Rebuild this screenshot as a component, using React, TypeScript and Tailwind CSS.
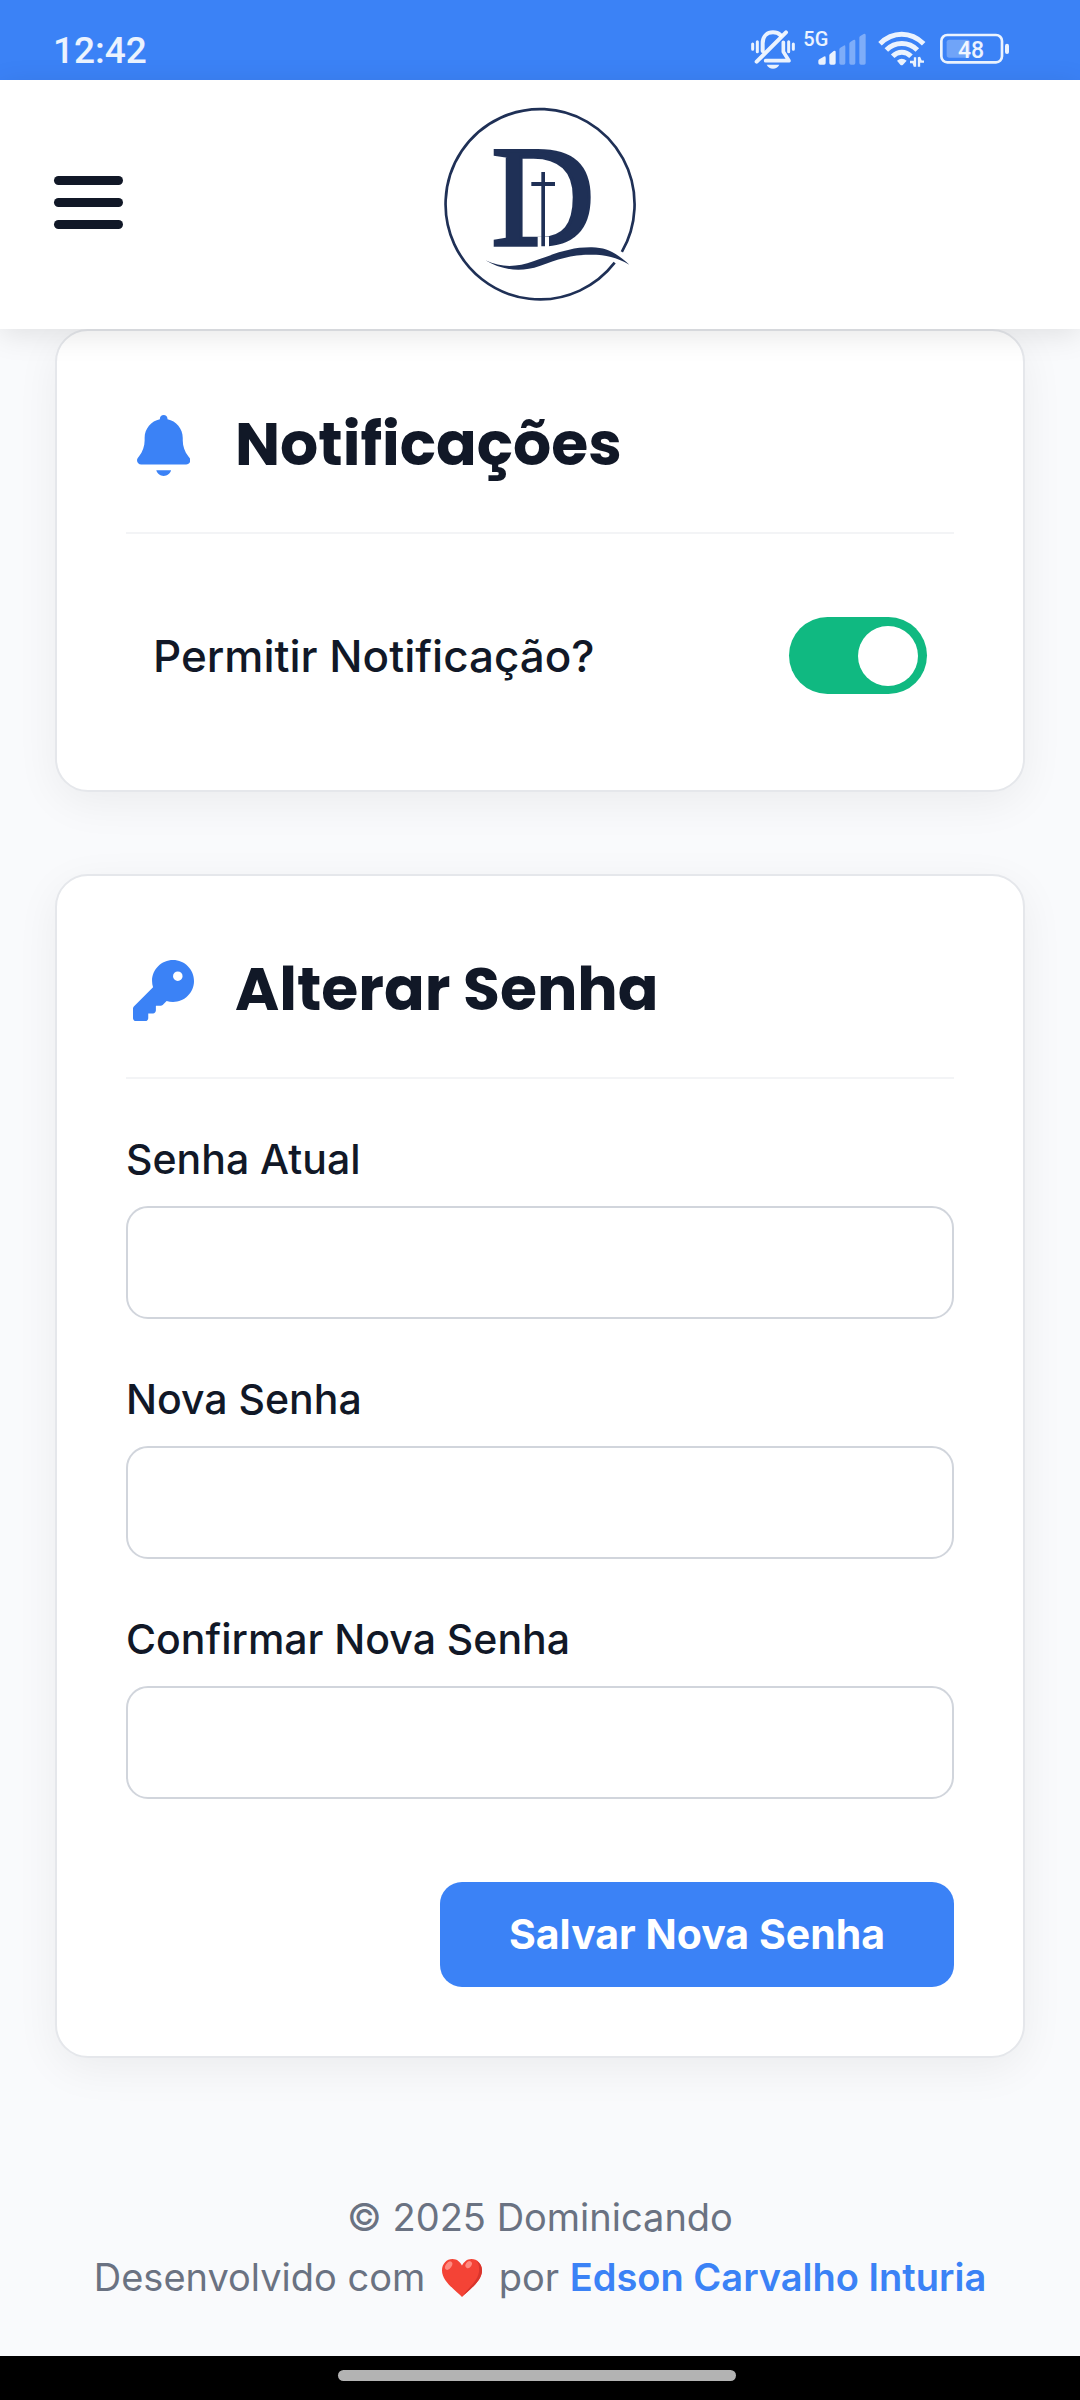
import { useState } from "react";
import { FaKey } from "react-icons/fa6";

function BellIcon() {
  return (
    <svg viewBox="0 0 448 512" className="h-[61px]" fill="currentColor" aria-hidden="true">
      <path d="M224 0c-17.7 0-32 14.3-32 32l0 3.2C119 50 64 114.6 64 192l0 21.7c0 48.1-16.4 94.8-46.4 132.4L7.8 358.3C2.7 364.6 0 372.4 0 380.5 0 400.1 15.9 416 35.5 416l376.9 0c19.6 0 35.5-15.9 35.5-35.5 0-8.1-2.7-15.9-7.8-22.2l-9.8-12.2C400.4 308.5 384 261.8 384 213.7l0-21.7c0-77.4-55-142-128-156.8l0-3.2c0-17.7-14.3-32-32-32zM162 464c7.1 27.6 32.2 48 62 48s54.9-20.4 62-48l-124 0z" />
    </svg>
  );
}

function SilentIcon() {
  return (
    <svg viewBox="90 88 138 120" className="mr-[7px] h-10 w-[46px]" fill="none" stroke="currentColor" strokeWidth="12" strokeLinecap="round">
      <path d="M98 133V149M112 126V156M206 126V156M220 133V149" strokeWidth="9" />
      <path d="M128 154V131C128 109 142 98 159 98C168 98 176 101 181 106" />
      <path d="M190 128V156L207 183H137" strokeLinejoin="round" strokeWidth="11" />
      <path d="M198 98L110 186" />
      <path d="M140 195H178C174 203 167 207 159 207S144 203 140 195Z" fill="currentColor" stroke="none" />
    </svg>
  );
}

function SignalIcon() {
  return (
    <svg viewBox="249 88 192 120" className="mr-[11px] h-10 w-16 overflow-visible" fill="currentColor">
      <text x="250" y="140" fontSize="60" fontFamily="Roboto, sans-serif" fontWeight="500">5G</text>
      <path d="M295 184Q295 181 298 179L311 171Q317 168 317 174V190Q317 195 312 195H300Q295 195 295 190Z" />
      <path d="M328 167Q328 164 331 162L341 154Q347 151 347 157V190Q347 195 342 195H333Q328 195 328 190Z" />
      <g opacity="0.38">
        <path d="M358 149Q358 146 361 144L371 138Q376 135 376 141V190Q376 195 371 195H363Q358 195 358 190Z" />
        <path d="M388 132Q388 129 391 127L400 121Q406 118 406 124V190Q406 195 401 195H393Q388 195 388 190Z" />
        <path d="M418 114Q418 111 421 109L431 103Q437 100 437 107V190Q437 195 432 195H423Q418 195 418 190Z" />
      </g>
    </svg>
  );
}

function WifiIcon() {
  return (
    <svg viewBox="474 88 144 120" className="mr-[13px] h-10 w-12" fill="none" stroke="currentColor">
      <path d="M480 132C518 94 572 94 611 132" strokeWidth="15" />
      <path d="M499 151C525 125 566 125 592 151" strokeWidth="15" />
      <path d="M518 170C534 154 557 154 573 170" strokeWidth="15" />
      <path d="M531 183Q545 171 560 183L549 195Q545 199 541 195Z" fill="currentColor" stroke="none" />
      <path d="M585 173V201M570 187H580L585 201M597 201V173L603 186H612" strokeWidth="7" />
    </svg>
  );
}

function BatteryIcon() {
  return (
    <svg viewBox="657 88 213 120" className="h-10 w-[71px] overflow-visible" fill="currentColor">
      <rect x="664" y="106" width="182" height="82" rx="18" fill="none" stroke="currentColor" strokeWidth="8" />
      <rect x="680" y="120" width="70" height="54" rx="8" opacity="0.3" />
      <rect x="855" y="132" width="12" height="31" rx="6" />
      <text x="753" y="174" fontSize="69" fontFamily="Roboto, sans-serif" fontWeight="500" textAnchor="middle">48</text>
    </svg>
  );
}

function Logo() {
  return (
    <svg viewBox="0 0 720 690" className="h-[230px] w-60 text-[#1f3056]" fill="currentColor" role="img" aria-label="Dominicando">
      <path d="M605.6 485.7A283.5 285.5 0 1 0 584 518" fill="none" stroke="currentColor" strokeWidth="8" />
      <text x="214" y="466" fontSize="430" fontFamily="Liberation Serif, serif" stroke="currentColor" strokeWidth="10">D</text>
      <rect x="353" y="440" width="34" height="36" fill="#fff" />
      <path d="M364 246H375V276H405V288H375V469H364V288H334V276H364Z" />
      <path d="M196 511C247 535 292 531 340 514C410 489 453 471 516 472C561 473 591 490 628 524C588 501 558 494 516 494C457 493 413 507 359 528C300 549 242 539 196 511Z" />
    </svg>
  );
}

function Heart() {
  return (
    <svg viewBox="0 0 44 42" className="mx-1 inline-block h-10 w-11 align-[-7px]" role="img" aria-label="amor">
      <path d="M22 41C17 35 1 25 1 13C1 6 6 1 12 1C17 1 20 4 22 8C24 4 27 1 32 1C38 1 43 6 43 13C43 25 27 35 22 41Z" fill="#f44336" />
      <path d="M37 3C41 5 43 9 43 13C43 25 27 35 22 41C28 31 40 24 40 12C40 8 39 5 37 3Z" fill="#d8342c" />
      <ellipse cx="8" cy="8" rx="3" ry="5" transform="rotate(35 8 8)" fill="#ff8a80" />
      <ellipse cx="29" cy="7" rx="3" ry="4" transform="rotate(35 29 7)" fill="#ff8a80" />
    </svg>
  );
}

function Card({ icon, title, children }: { icon: React.ReactNode; title: string; children: React.ReactNode }) {
  return (
    <section className="rounded-[33px] border-2 border-gray-200 bg-white p-[69px] shadow-[0_11px_44px_rgba(0,0,0,0.06)]">
      <header className="flex items-center gap-[34px] border-b-2 border-gray-100 pb-11">
        <span className="flex w-[75px] justify-center pt-0.5 text-[61px] text-[#3b82f6]">{icon}</span>
        <h2 className="font-[Poppins,Inter,sans-serif] text-[60px] leading-[88px] font-bold">{title}</h2>
      </header>
      {children}
    </section>
  );
}

function PasswordField({ id, label }: { id: string; label: string }) {
  return (
    <div className="flex flex-col gap-3">
      <label htmlFor={id} className="text-[41px] leading-[69px] font-medium">{label}</label>
      <input id={id} type="password" className="h-[113px] w-full rounded-[22px] border-2 border-gray-300 bg-white px-9 text-[41px] outline-none focus:border-[#3b82f6]" />
    </div>
  );
}

export default function App() {
  const [allowed, setAllowed] = useState(true);

  return (
    <div className="flex min-h-screen flex-col bg-[#f9fafc] font-[Inter,sans-serif] text-[#111827]">
      <div className="flex h-20 items-end justify-between bg-[#3b82f6] pr-[70px] pb-[11px] pl-[53px] text-white/90">
        <time className="font-[Roboto,sans-serif] text-[37px] leading-9 font-medium">12:42</time>
        <div className="flex">
          <SilentIcon />
          <SignalIcon />
          <WifiIcon />
          <BatteryIcon />
        </div>
      </div>

      <header className="relative z-10 grid h-[249px] grid-cols-[1fr_auto_1fr] items-center bg-white px-[54px] shadow-[0_6px_28px_rgba(0,0,0,0.1)]">
        <button type="button" aria-label="Abrir menu" className="mb-1 flex w-[69px] flex-col gap-[13px]">
          <span className="h-[9px] rounded-full bg-[#111827]" />
          <span className="h-[9px] rounded-full bg-[#111827]" />
          <span className="h-[9px] rounded-full bg-[#111827]" />
        </button>
        <Logo />
      </header>

      <main className="flex flex-col gap-[82px] px-[55px]">
        <Card icon={<BellIcon />} title="Notificações">
          <div className="mt-14 flex items-center justify-between p-[27px]">
            <label htmlFor="notifications" className="text-[44px] leading-[68px] font-medium">Permitir Notificação?</label>
            <input
              id="notifications"
              type="checkbox"
              role="switch"
              checked={allowed}
              onChange={(e) => setAllowed(e.target.checked)}
              className="flex h-[77px] w-[138px] cursor-pointer appearance-none items-center rounded-full bg-gray-300 px-[9px] before:size-[60px] before:rounded-full before:bg-white before:content-[''] checked:justify-end checked:bg-[#10b981]"
            />
          </div>
        </Card>

        <Card icon={<FaKey />} title="Alterar Senha">
          <form className="flex flex-col" onSubmit={(e) => e.preventDefault()}>
            <div className="mt-[46px] flex flex-col gap-[46px]">
              <PasswordField id="current" label="Senha Atual" />
              <PasswordField id="new" label="Nova Senha" />
              <PasswordField id="confirm" label="Confirmar Nova Senha" />
            </div>
            <button type="submit" className="mt-[83px] self-end rounded-[22px] bg-[#3b82f6] px-[69px] text-[41px] leading-[105px] font-bold text-white">
              Salvar Nova Senha
            </button>
          </form>
        </Card>
      </main>

      <footer className="mt-auto px-11 pb-[49px] text-center text-[38px] leading-[60px] text-gray-500">
        <p>© 2025 Dominicando</p>
        <p>
          Desenvolvido com <Heart /> por{" "}
          <a href="#autor" className="font-semibold text-[#3b82f6]">Edson Carvalho Inturia</a>
        </p>
      </footer>

      <div className="flex h-11 justify-center bg-black pt-3.5 pr-1.5">
        <div className="h-[11px] w-[37%] rounded-full bg-[#b3b3b3]" />
      </div>
    </div>
  );
}
